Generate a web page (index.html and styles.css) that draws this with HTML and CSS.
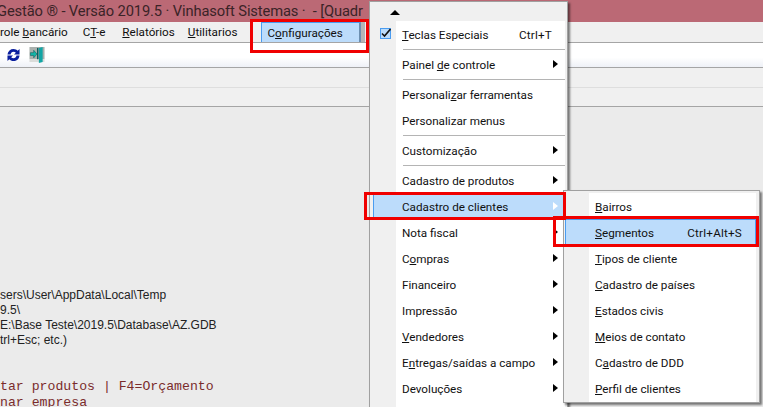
FILE: index.html
```html
<!DOCTYPE html>
<html lang="pt-BR">
<head>
  <meta charset="UTF-8" />
  <title>Gestão - Configurações</title>
  <link rel="stylesheet" href="styles.css">
</head>
<body>
<div class="app">
  <div class="titlebar">Gestão ® - Versão 2019.5 · Vinhasoft Sistemas ·  - [Quadr</div>

  <div class="menubar">
    <span class="bar-item bar-first">role <u>b</u>ancário</span>
    <span class="bar-item bar-ct">C<u>T</u>-e</span>
    <span class="bar-item bar-rel"><u>R</u>elatórios</span>
    <span class="bar-item bar-util"><u>U</u>tilitarios</span>
    <span class="bar-item bar-active">C<u>o</u>nfigurações</span>
    <span class="bar-grip"></span>
  </div>

  <div class="toolbar">
    <svg class="tool-icon" width="13" height="14" viewBox="0 0 14 14">
      <path d="M0.500 6.500 C1 2.500 3.700 0.500 7 0.500 C9 0.500 10.500 1.300 11.500 2.500 L13.500 0.500 L13.500 6.500 L7.500 6.500 L9.500 4.500 C8.900 3.900 8 3.500 7 3.500 C5.200 3.500 4.200 4.700 3.800 6.500 Z" fill="#0a1f9e"/>
      <path d="M13.500 7.500 C13 11.500 10.300 13.500 7 13.500 C5 13.500 3.500 12.700 2.500 11.500 L0.500 13.500 L0.500 7.500 L6.500 7.500 L4.500 9.500 C5.100 10.100 6 10.500 7 10.500 C8.800 10.500 9.800 9.300 10.200 7.500 Z" fill="#0a1f9e"/>
    </svg>
    <svg class="tool-icon" width="16" height="16" viewBox="0 0 16 17">
      <rect x="0" y="0" width="16" height="13" fill="#a9b0ad"/>
      <rect x="0" y="13" width="16" height="3" fill="#dadcda"/>
      <path d="M10 1 L14 0 L14 16 L10 17 Z" fill="#12a5a5"/>
      <rect x="8" y="1" width="1.500" height="12" fill="#0b5f5f"/>
      <path d="M1 6 L4.500 6 L4.500 3.500 L8 7.500 L4.500 11.500 L4.500 9 L1 9 Z" fill="#12b5a8" stroke="#0b5f5f" stroke-width=".6"/>
    </svg>
  </div>

  <div class="band"></div>
  <div class="band band-last"></div>

  <div class="content">
    <div class="log">
      <div>sers\User\AppData\Local\Temp</div>
      <div>9.5\</div>
      <div>E:\Base Teste\2019.5\Database\AZ.GDB</div>
      <div>trl+Esc; etc.)</div>
    </div>
    <div class="hints">
      <div>tar produtos | F4=Orçamento</div>
      <div>nar empresa</div>
    </div>
  </div>

  <div class="menu menu-main">
    <div class="scroll-up"><span class="arrow-up"></span></div>
    <div class="menu-body">
      <div class="item">
        <svg class="check" width="11" height="11" viewBox="0 0 11 11">
          <rect x=".5" y=".5" width="10" height="10" fill="#bcdcfb" stroke="#4a9cf0"/>
          <path d="M2 5.500 L4.500 8 L10.500 1" fill="none" stroke="#111" stroke-width="1.600"/>
        </svg>
        <span class="label"><u>T</u>eclas Especiais</span><span class="key">Ctrl+T</span>
      </div>
      <div class="sep"></div>
      <div class="item sub"><span class="label">Painel <u>d</u>e controle</span></div>
      <div class="sep"></div>
      <div class="item"><span class="label">Personali<u>z</u>ar ferramentas</span></div>
      <div class="item"><span class="label">Personalizar menus</span></div>
      <div class="sep"></div>
      <div class="item sub"><span class="label">Customização</span></div>
      <div class="sep"></div>
      <div class="item sub"><span class="label">Cadastro de produtos</span></div>
      <div class="item sub item-open"><span class="label">Cadastro de clientes</span></div>
      <div class="item sub"><span class="label">Nota fiscal</span></div>
      <div class="item sub"><span class="label">C<u>o</u>mpras</span></div>
      <div class="item sub"><span class="label">Financeiro</span></div>
      <div class="item sub"><span class="label">Impressão</span></div>
      <div class="item sub"><span class="label"><u>V</u>endedores</span></div>
      <div class="item sub"><span class="label">E<u>n</u>tregas/saídas a campo</span></div>
      <div class="item sub"><span class="label">Devoluções</span></div>
    </div>
  </div>

  <div class="menu menu-sub">
    <div class="menu-body">
      <div class="item"><span class="label"><u>B</u>airros</span></div>
      <div class="item item-active"><span class="label"><u>S</u>egmentos</span><span class="key">Ctrl+Alt+S</span></div>
      <div class="item"><span class="label"><u>T</u>ipos de cliente</span></div>
      <div class="item"><span class="label"><u>C</u>adastro de países</span></div>
      <div class="item"><span class="label"><u>E</u>stados civis</span></div>
      <div class="item"><span class="label"><u>M</u>eios de contato</span></div>
      <div class="item"><span class="label">C<u>a</u>dastro de DDD</span></div>
      <div class="item"><span class="label"><u>P</u>erfil de clientes</span></div>
    </div>
  </div>

  <div class="mark mark-config"></div>
  <div class="mark mark-clientes"></div>
  <div class="mark mark-segmentos"></div>
</div>
</body>
</html>
```

FILE: styles.css
```css
* {
  box-sizing: border-box;
  margin: 0;
  padding: 0;
}

html, body {
  width: 763px;
  height: 407px;
  overflow: hidden;
}

.app {
  position: relative;
  display: flex;
  flex-direction: column;
  width: 763px;
  height: 407px;
  overflow: hidden;
  background-color: #ebebeb;
  color: #111;
  font-family: Roboto, sans-serif;
  font-size: 11.7px;
}

.titlebar {
  flex: none;
  height: 22px;
  margin-left: -3px;
  background-color: #bb6975;
  color: #3a2327;
  font-size: 14.7px;
  letter-spacing: -0.11px;
  line-height: 22px;
  white-space: pre;
}

.menubar {
  flex: none;
  display: flex;
  height: 21px;
  background-color: #f0f0f0;
  border-bottom: 1px solid #a5a5a5;
  line-height: 21px;
}

.bar-item {
  white-space: nowrap;
}

.bar-ct {
  margin-left: 15px;
}

.bar-rel {
  margin-left: 17px;
}

.bar-util {
  margin-left: 13px;
}

.bar-active {
  width: 100px;
  margin-left: 24px;
  padding-left: 5px;
  background-color: #bcdcfb;
  border-left: 1px solid #4a9cf0;
  border-right: 2px solid #6c8fb0;
  border-top: 1px solid #4a9cf0;
}

.bar-grip {
  width: 4px;
  background-color: #b5b5b5;
}

.toolbar {
  flex: none;
  display: flex;
  align-items: center;
  gap: 9px;
  height: 25px;
  padding-left: 7px;
  background: linear-gradient(#ffffff, #ffffff 60%, #eef1f7);
  border-bottom: 1px solid #a5a5a5;
}

.band {
  flex: none;
  height: 20px;
  background-color: #f0f0f0;
  border-bottom: 1px solid #dedede;
}

.band-last {
  height: 19px;
  border-bottom-color: #a5a5a5;
}

.content {
  flex: 1;
  min-height: 0;
  padding-top: 181px;
}

.log {
  font-family: "Liberation Sans", sans-serif;
  font-size: 12px;
  line-height: 15px;
  color: #222;
}

.hints {
  margin-top: 31px;
  font-family: "Liberation Mono", monospace;
  font-size: 13.2px;
  line-height: 16px;
  color: #7a2b2b;
}

.menu {
  position: absolute;
  display: flex;
  flex-direction: column;
  background-color: #f0f0f0;
  border: 1px solid #a0a0a0;
  box-shadow: 2px 2px 2px rgba(0, 0, 0, 0.5);
}

.menu-main {
  left: 369px;
  top: 1px;
  width: 199px;
  height: 420px;
  padding: 1px 2px 0 2px;
}

.menu-sub {
  left: 563px;
  top: 190px;
  width: 197px;
  height: 213px;
  padding: 2px 3px 0 1px;
}

.scroll-up {
  display: flex;
  height: 18px;
  align-items: center;
  padding-left: 18px;
}

.arrow-up {
  width: 0;
  height: 0;
  border-left: 5px solid transparent;
  border-right: 5px solid transparent;
  border-bottom: 5px solid #000;
}

.menu-body {
  flex: 1;
  background: linear-gradient(90deg, #f0f0f0 24px, #ffffff 24px);
}

.item {
  position: relative;
  display: flex;
  align-items: center;
  height: 26px;
  padding: 2px 0 0 30px;
  white-space: nowrap;
}

.sep {
  height: 4px;
  margin: 0 0 0 31px;
  border-top: 2px solid transparent;
  background-color: #b4b4b4;
  background-clip: padding-box;
  border-bottom: 1px solid transparent;
}

.check {
  position: absolute;
  left: 8px;
  top: 7px;
}

.label {
  flex: 1;
}

.key {
  padding-right: 13px;
  letter-spacing: 0.2px;
}

.sub::after {
  content: "";
  position: absolute;
  right: 7px;
  top: 9px;
  border-top: 4px solid transparent;
  border-bottom: 4px solid transparent;
  border-left: 5px solid #000;
}

.item-open {
  margin-left: 1px;
  padding-left: 28px;
  background-color: #bcdcfb;
  border-left: 1px solid #4a9cf0;
}

.item-open::after {
  border-left-color: #fff;
}

.item-active {
  padding: 1px 0 0 29px;
  background-color: #bcdcfb;
  border: 1px solid #4a9cf0;
}

.mark {
  position: absolute;
  border: 3px solid #f00000;
}

.mark-config {
  left: 250px;
  top: 19px;
  width: 119px;
  height: 34px;
}

.mark-clientes {
  left: 364px;
  top: 192px;
  width: 202px;
  height: 28px;
}

.mark-segmentos {
  left: 553px;
  top: 216px;
  width: 206px;
  height: 31px;
}
```
